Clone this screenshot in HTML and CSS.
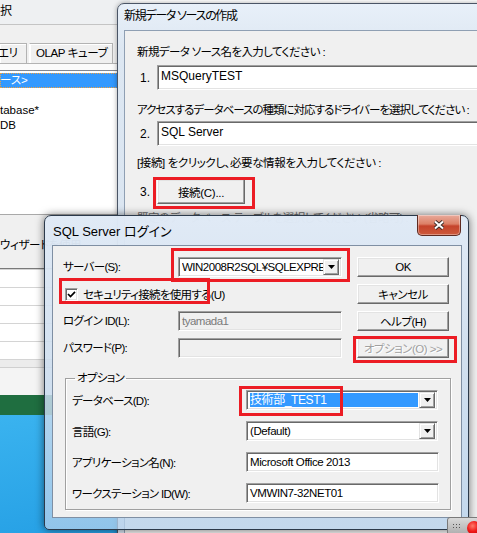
FILE: index.html
```html
<!DOCTYPE html>
<html lang="ja">
<head>
<meta charset="utf-8">
<title>SQL Server ログイン</title>
<link rel="stylesheet" href="styles.css">
</head>
<body>
<div class="screen">
  <div class="backdrop">
    <div class="sheet"></div>
    <div class="sheet-band"></div>
    <div class="sheet-rest"></div>
    <div class="status"></div>
    <div class="desktop"></div>
  </div>

  <section class="win-a">
    <div class="a-title">択</div>
    <div class="a-tabs">
      <div class="a-tab a-tab1">エリ</div>
      <div class="a-tab a-tab2">OLAP キューブ</div>
    </div>
    <div class="a-panel">
      <ul class="a-list">
        <li class="sel">ース&gt;</li>
        <li></li>
        <li>tabase*</li>
        <li>DB</li>
      </ul>
    </div>
    <div class="a-foot">ウィザードを使用</div>
  </section>

  <section class="win win-b">
    <header class="titlebar b-title">新規データ ソースの作成</header>
    <div class="client b-client">
      <p class="b-label l1">新規データ ソース名を入力してください :</p>
      <div class="b-row r1"><span class="num">1.</span><div class="edit b-field">MSQueryTEST</div></div>
      <p class="b-label l2">アクセスするデータベースの種類に対応するドライバーを選択してください :</p>
      <div class="b-row r2"><span class="num">2.</span><div class="edit b-field">SQL Server</div></div>
      <p class="b-label l3">[接続] をクリックし、必要な情報を入力してください :</p>
      <div class="b-row r3"><span class="num">3.</span><button class="btn b-connect">接続(C)...</button></div>
      <p class="b-label l4">既定のデータベース テーブルを選択してください (省略可) :</p>
    </div>
  </section>

  <section class="win win-c">
    <header class="titlebar c-title">SQL Server ログイン</header>
    <button class="close" aria-label="閉じる">
      <svg width="12" height="10" viewBox="0 0 12 10"><path d="M2 1.5 L10 8.5 M10 1.5 L2 8.5" stroke="#3b2b28" stroke-width="3.8" fill="none"/><path d="M2 1.5 L10 8.5 M10 1.5 L2 8.5" stroke="#fff" stroke-width="2" fill="none"/></svg>
    </button>
    <div class="client c-client">
      <div class="c-grid">
        <span class="lbl">サーバー(S):</span>
        <div class="edit combo"><span class="combo-text">WIN2008R2SQL¥SQLEXPRESS</span><span class="drop"><svg width="7" height="4" viewBox="0 0 7 4"><polygon points="0,0 7,0 3.5,4" fill="#000"/></svg></span></div>
        <button class="btn c-btn">OK</button>

        <label class="check-row"><span class="check"><svg width="9" height="9" viewBox="0 0 9 9"><path d="M1 4 L3.5 6.5 L8 1.8" stroke="#000" stroke-width="1.7" fill="none"/></svg></span>セキュリティ接続を使用する(U)</label>
        <button class="btn c-btn">キャンセル</button>

        <span class="lbl">ログイン ID(L):</span>
        <div class="edit disabled">tyamada1</div>
        <button class="btn c-btn">ヘルプ(H)</button>

        <span class="lbl">パスワード(P):</span>
        <div class="edit disabled"></div>
        <button class="btn c-btn off">オプション(O) &gt;&gt;</button>
      </div>

      <fieldset class="group">
        <legend>オプション</legend>
        <div class="g-row"><span class="glbl">データベース(D):</span><div class="edit combo g-ctl"><span class="combo-text selected">技術部_TEST1</span><span class="drop"><svg width="7" height="4" viewBox="0 0 7 4"><polygon points="0,0 7,0 3.5,4" fill="#000"/></svg></span></div></div>
        <div class="g-row"><span class="glbl">言語(G):</span><div class="edit combo g-ctl"><span class="combo-text">(Default)</span><span class="drop"><svg width="7" height="4" viewBox="0 0 7 4"><polygon points="0,0 7,0 3.5,4" fill="#000"/></svg></span></div></div>
        <div class="g-row"><span class="glbl">アプリケーション名(N):</span><div class="edit g-ctl g-edit">Microsoft Office 2013</div></div>
        <div class="g-row"><span class="glbl">ワークステーション ID(W):</span><div class="edit g-ctl g-edit">VMWIN7-32NET01</div></div>
      </fieldset>
    </div>
  </section>

  <div class="mark mark-connect"></div>
  <div class="mark mark-server"></div>
  <div class="mark mark-check"></div>
  <div class="mark mark-option"></div>
  <div class="mark mark-db"></div>

  <div class="tray"><span class="grip"></span><span class="rec"></span></div>
</div>
</body>
</html>
```

FILE: styles.css
```css
* { box-sizing: border-box; }
html, body { margin: 0; padding: 0; }
body {
  width: 477px;
  height: 533px;
  overflow: hidden;
  font-family: "Liberation Sans", "Noto Sans CJK JP", sans-serif;
  font-size: 12px;
  color: #000;
  font-feature-settings: "palt";
}
.screen { position: relative; width: 477px; height: 533px; overflow: hidden; background: #fff; }

/* background: spreadsheet + desktop */
.backdrop { display: flex; flex-direction: column; height: 100%; }
.sheet {
  height: 360px; flex: none;
  background: repeating-linear-gradient(to bottom, #fff 0 17px, #d4d4d4 17px 18px);
}
.sheet-band { height: 8px; flex: none; background: #ececec; border-bottom: 1px solid #d0d0d0; }
.sheet-rest { height: 27px; flex: none; background: #f4f4f4; }
.status { height: 20px; flex: none; background: #1f6e40; }
.desktop { flex: 1; background: linear-gradient(170deg, #3ab3ef 0%, #28a2e6 60%, #1d92da 100%); }

/* window A (behind, left) */
.win-a {
  position: absolute; left: 0; top: 0;
  width: 130px; height: 269px;
  background: #f0f0f0;
  border-bottom: 1px solid #7a7a7a;
  display: flex; flex-direction: column;
  font-size: 11.5px; letter-spacing: -0.4px;
}
.a-title {
  height: 25px; flex: none;
  border-bottom: 1px solid #c4c4c4;
  padding: 3px 0 0 0;
  line-height: 16px;
  font-size: 12px;
  background: #eef0f2;
}
.a-tabs { display: flex; gap: 2px; margin-top: 18px; height: 20px; flex: none; }
.a-tab {
  height: 20px; line-height: 18px;
  background: #f0f0f0;
  border: 1px solid #b3b3b3; border-bottom: none;
  border-left-color: #fff;
  box-shadow: inset 1px 1px 0 #fff;
  white-space: nowrap;
}
.a-tab1 { width: 28px; margin-left: -1px; text-indent: -2px; overflow: hidden; }
.a-tab2 { width: 84px; padding-left: 6px; }
.a-panel {
  height: 152px; flex: none;
  background: #fbfbfb;
  border-top: 1px solid #b3b3b3;
  padding-top: 6px;
}
.a-list {
  list-style: none; margin: 0; padding: 2px 0 0 0;
  height: 145px;
  background: #fff;
  border-top: 1px solid #828790;
  border-bottom: 1px solid #a9a9a9;
  letter-spacing: 0;
}
.a-list li { height: 15px; line-height: 15px; white-space: nowrap; }
.a-list li.sel {
  background: #3399ff; color: #fff;
  outline: 1px dotted #f0a040; outline-offset: -1px;
}
.a-foot { margin-top: 22px; line-height: 16px; white-space: nowrap; }

/* generic window */
.win {
  position: absolute;
  border: 1px solid #4a5566;
  border-radius: 7px 7px 5px 5px;
  display: flex; flex-direction: column;
}
.titlebar { flex: none; white-space: nowrap; }
.client { background: #f0f0f0; flex: none; }

/* window B */
.win-b {
  left: 117px; top: 3px;
  width: 400px; height: 545px;
  padding: 0 6px;
  background: linear-gradient(to bottom, #e8f0f9 0%, #dde7f2 8%, #d6e2ef 100%);
  box-shadow: 0 0 5px rgba(0,0,0,0.35);
  font-size: 11.5px;
  letter-spacing: -0.6px;
}
.b-title { height: 26px; padding: 4px 0 0 0; line-height: 16px; font-size: 12px; letter-spacing: -1.3px; }
.b-client {
  flex: 1;
  border: 1px solid #8f9fb3;
  padding: 13px 0 0 12px;
}
.b-label { margin: 0; height: 16px; line-height: 16px; white-space: nowrap; }
.b-row { display: flex; align-items: center; height: 25px; margin-left: 3px; }
.num { width: 17px; flex: none; font-size: 12px; letter-spacing: 0; }
.r1 { margin-top: 5px; }
.l2 { margin-top: 12px; letter-spacing: -1px; }
.r2 { margin-top: 3px; }
.l3 { margin-top: 9px; letter-spacing: -0.4px; }
.r3 { margin-top: 8px; }
.l4 { margin-top: 6px; color: #6a6a6a; }
.b-field { width: 340px; height: 25px; line-height: 21px; padding-left: 3px; font-size: 12px; letter-spacing: 0; }
.b-connect { width: 88px; height: 25px; font-size: 11.5px; letter-spacing: -0.3px; }

/* classic controls */
.btn {
  font-family: inherit;
  font-feature-settings: "palt";
  color: #000;
  background: #f0f0f0;
  border: 1px solid;
  border-color: #fff #696969 #696969 #fff;
  box-shadow: inset -1px -1px 0 #a0a0a0, inset 1px 1px 0 #e3e3e3;
  padding: 0;
  margin: 0;
  border-radius: 0;
  white-space: nowrap;
}
.edit {
  background: #fff;
  border: 1px solid;
  border-color: #a0a0a0 #fff #fff #a0a0a0;
  box-shadow: inset 1px 1px 0 #696969, inset -1px -1px 0 #e3e3e3;
  white-space: nowrap;
  overflow: hidden;
}
.edit.disabled { background: #f0f0f0; color: #7a7a7a; }

/* window C */
.win-c {
  left: 44px; top: 215px;
  width: 425px; height: 315px;
  padding: 0 6px 0 7px;
  border-color: #2c3a4b;
  background: linear-gradient(to bottom, rgba(224,234,246,0.98) 0%, rgba(208,223,239,0.9) 40%, rgba(180,208,236,0.75) 100%);
  box-shadow: 0 0 9px rgba(0,0,0,0.55);
  font-size: 11.5px;
  letter-spacing: -0.7px;
}
.c-title { height: 29px; padding: 8px 0 0 1px; line-height: 16px; font-size: 13px; letter-spacing: 0; }
.close {
  position: absolute; right: 7px; top: -1px;
  width: 44px; height: 21px;
  padding: 0; margin: 0;
  border: 1px solid #5e2a21;
  border-top: none;
  border-radius: 0 0 5px 5px;
  background: linear-gradient(to bottom, #e9aa9b 0%, #dc8066 45%, #c5432b 55%, #cd5a3c 100%);
  box-shadow: inset 0 0 0 1px rgba(255,255,255,0.35);
  display: flex; align-items: center; justify-content: center;
}
.c-client {
  border: 1px solid #7f8fa3;
  padding: 0 0 7px 0;
}
.c-grid {
  display: grid;
  grid-template-columns: 115px 179px 92px;
  grid-auto-rows: 20px;
  row-gap: 7px;
  margin: 11px 0 0 10px;
  align-items: center;
}
.lbl { white-space: nowrap; line-height: 20px; }
.c-grid .edit { width: 164px; height: 20px; line-height: 18px; padding-left: 3px; font-size: 11.5px; letter-spacing: -0.5px; }
.c-btn { height: 20px; width: 92px; font-size: 11.5px; letter-spacing: -0.5px; }
.c-btn.off { color: #a0a0a0; text-shadow: 1px 1px 0 #fff; }
.combo { display: flex; align-items: stretch; padding-right: 2px; }
.combo-text { flex: 1; overflow: hidden; white-space: nowrap; }
.drop {
  flex: none; width: 16px; height: 16px; margin-top: 1px;
  background: #f0f0f0;
  border: 1px solid; border-color: #e3e3e3 #696969 #696969 #e3e3e3;
  box-shadow: inset 1px 1px 0 #fff, inset -1px -1px 0 #a0a0a0;
  display: flex; align-items: center; justify-content: center;
}
.check-row {
  grid-column: 1 / 3;
  display: flex; align-items: center;
  padding-left: 2px;
  white-space: nowrap;
}
.check {
  width: 13px; height: 13px; margin-right: 5px;
  background: #fff;
  border: 1px solid; border-color: #a0a0a0 #fff #fff #a0a0a0;
  box-shadow: inset 1px 1px 0 #696969, inset -1px -1px 0 #e3e3e3;
  display: flex; align-items: center; justify-content: center;
}

.group {
  margin: 13px 0 0 12px;
  width: 386px;
  padding: 5px 0 6px 6px;
  border: 1px solid #a0a0a0;
  box-shadow: inset 1px 1px 0 #fff, 1px 1px 0 #fff;
  display: flex; flex-direction: column; gap: 11px;
  min-width: 0;
}
.group legend { padding: 0 2px; margin-left: 3px; line-height: 14px; }
.g-row { display: flex; align-items: center; height: 20px; }
.glbl { width: 174px; flex: none; white-space: nowrap; }
.g-ctl { width: 192px; height: 20px; line-height: 18px; padding-left: 3px; font-size: 11.5px; letter-spacing: -0.4px; }
.g-edit { width: 193px; }
.combo-text.selected { background: #3399ff; color: #fff; margin: 2px 1px 2px 0; line-height: 14px; font-size: 12px; }

/* red annotation frames */
.mark { position: absolute; border: 3px solid #ec1c24; }
.mark-connect { left: 153px; top: 177px; width: 102px; height: 32px; }
.mark-server { left: 171px; top: 248px; width: 179px; height: 34px; }
.mark-check { left: 59px; top: 278px; width: 151px; height: 26px; }
.mark-option { left: 353px; top: 336px; width: 104px; height: 27px; }
.mark-db { left: 239px; top: 386px; width: 104px; height: 30px; }

/* tray widget */
.tray {
  position: absolute; left: 447px; top: 517px;
  width: 40px; height: 20px;
  border-radius: 3px;
  background: linear-gradient(to bottom, #d9d9d9, #a9a9a9);
  border: 1px solid #7a7a7a;
}
.grip {
  position: absolute; left: 4px; top: 5px; width: 8px; height: 6px;
  background: radial-gradient(circle, #555 0.8px, transparent 1px) 0 0 / 3px 3px;
}
.rec {
  position: absolute; left: 19px; top: 3px; width: 14px; height: 14px; border-radius: 50%;
  background: radial-gradient(circle at 40% 35%, #ff7a6a 0%, #f01818 45%, #b00000 100%);
}
```
